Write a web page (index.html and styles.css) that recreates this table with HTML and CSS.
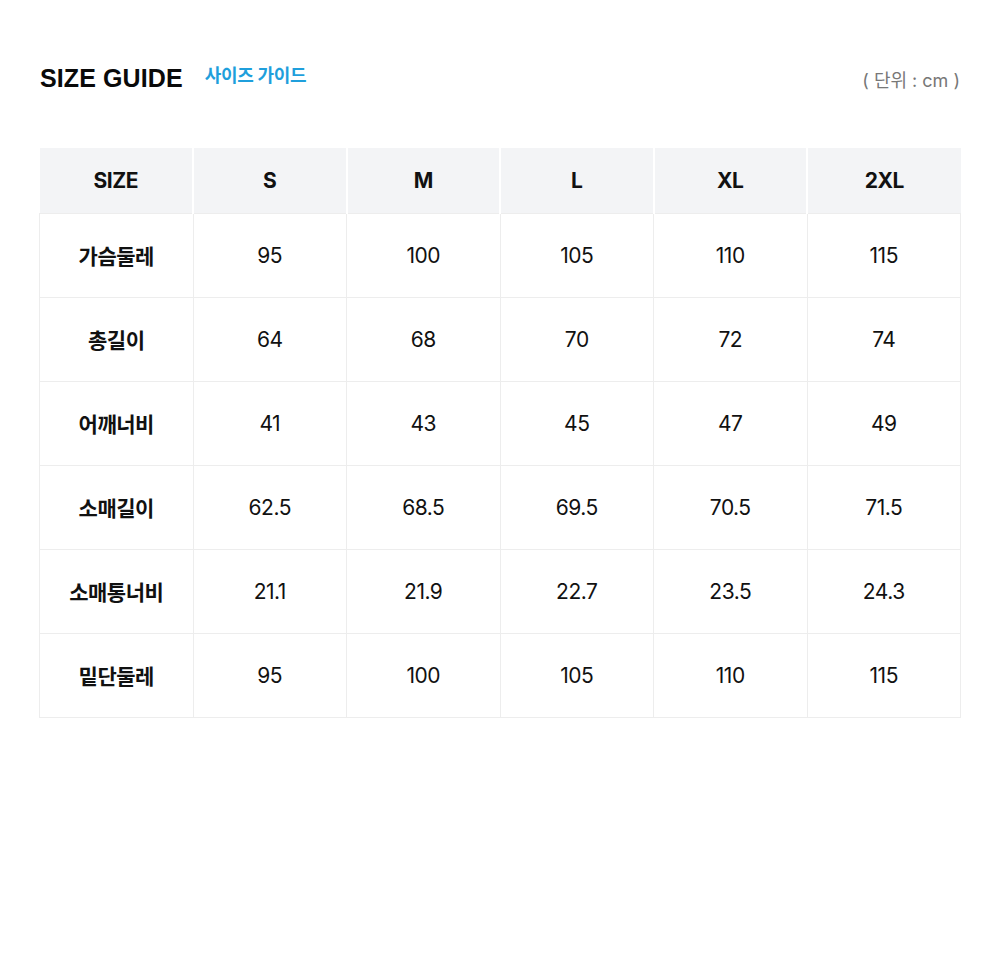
FILE: index.html
```html
<!DOCTYPE html>
<html lang="ko">
<head>
<meta charset="utf-8">
<title>Size Guide</title>
<link rel="stylesheet" href="styles.css">
</head>
<body>
<div class="page">
  <div class="head">
    <h1 class="title">SIZE GUIDE</h1>
    <span class="subtitle">사이즈 가이드</span>
    <span class="unit">( 단위 : cm )</span>
  </div>
  <table class="sizes">
    <thead>
      <tr><th>SIZE</th><th>S</th><th>M</th><th>L</th><th>XL</th><th>2XL</th></tr>
    </thead>
    <tbody>
      <tr><th>가슴둘레</th><td>95</td><td>100</td><td>105</td><td>110</td><td>115</td></tr>
      <tr><th>총길이</th><td>64</td><td>68</td><td>70</td><td>72</td><td>74</td></tr>
      <tr><th>어깨너비</th><td>41</td><td>43</td><td>45</td><td>47</td><td>49</td></tr>
      <tr><th>소매길이</th><td>62.5</td><td>68.5</td><td>69.5</td><td>70.5</td><td>71.5</td></tr>
      <tr><th>소매통너비</th><td>21.1</td><td>21.9</td><td>22.7</td><td>23.5</td><td>24.3</td></tr>
      <tr><th>밑단둘레</th><td>95</td><td>100</td><td>105</td><td>110</td><td>115</td></tr>
    </tbody>
  </table>
</div>
</body>
</html>
```
FILE: styles.css
```css
* { box-sizing: border-box; }
html, body { margin: 0; background: #fff; }
body {
  font-family: Inter, "Noto Sans CJK KR", sans-serif;
  color: #111;
}
.page {
  padding: 64px 39px 0 39px;
}
.head {
  display: flex;
  align-items: baseline;
  height: 84px;
}
.title {
  margin: 0 0 0 1px;
  font-family: "Liberation Sans", "Noto Sans CJK KR", sans-serif;
  font-size: 25px;
  font-weight: 700;
  letter-spacing: 0.1px;
  color: #0a0a0a;
}
.subtitle {
  margin-left: 22px;
  font-size: 18px;
  font-weight: 700;
  color: #1f9fdc;
  letter-spacing: -0.3px;
  position: relative;
  top: -5px;
}
.unit {
  margin-left: auto;
  font-size: 18px;
  color: #777;
  letter-spacing: 0;
  margin-right: 1px;
}
.sizes {
  width: 922px;
  border-collapse: collapse;
  table-layout: fixed;
}
.sizes th, .sizes td {
  text-align: center;
  font-size: 21px;
  letter-spacing: -0.5px;
}
.sizes thead th {
  height: 65px;
  background: #f3f4f6;
  border-left: 2px solid #fff;
  border-right: 2px solid #fff;
  font-weight: 700;
}
.sizes thead th:first-child { border-left: 0; }
.sizes thead th:last-child { border-right: 0; }
.sizes tbody th, .sizes tbody td {
  height: 84px;
  border: 1px solid #ededed;
  font-weight: 400;
}
.sizes tbody th { font-weight: 700; }
```
